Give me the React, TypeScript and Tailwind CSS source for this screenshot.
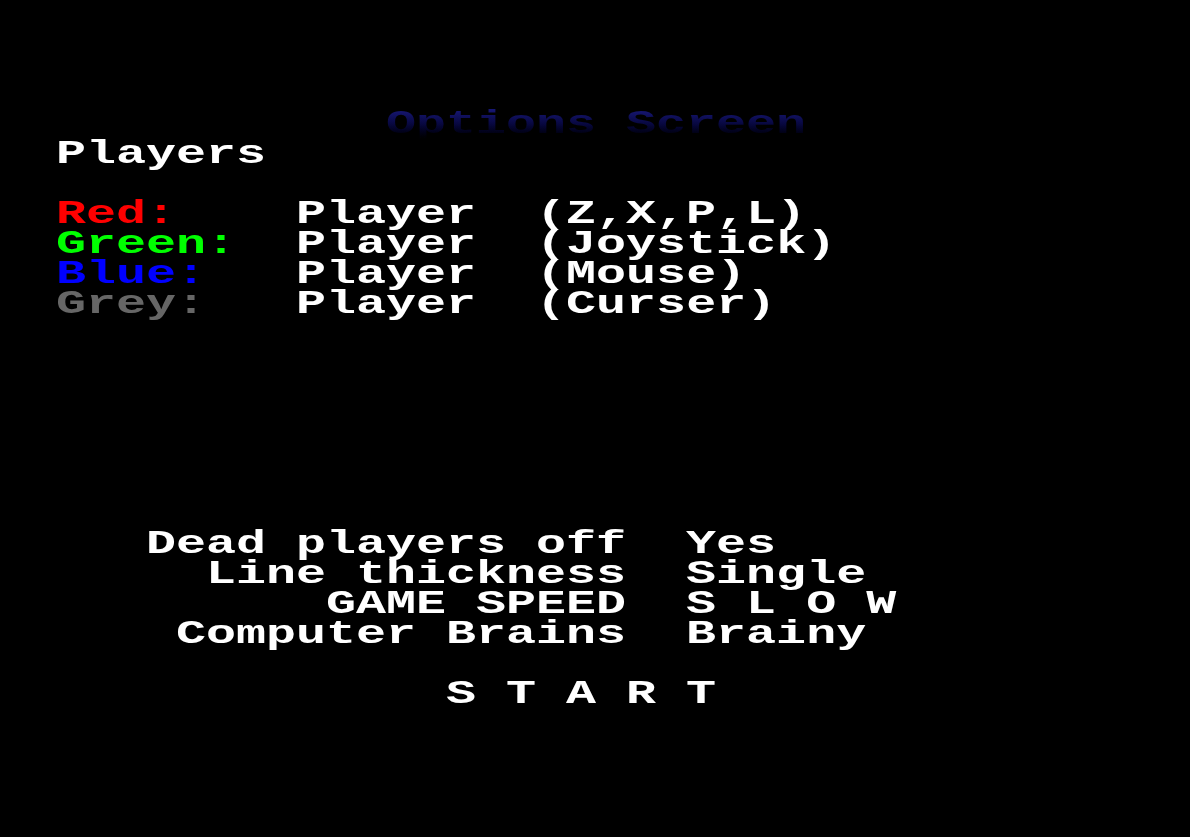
import React from 'react';

type Seg = { text: string; color?: string };

const rows: Seg[][] = [
  [{ text: 'Players' }],
  [],
  [{ text: 'Red:', color: 'text-[#ff0000]' }, { text: '    Player  (Z,X,P,L)' }],
  [{ text: 'Green:', color: 'text-[#00ff00]' }, { text: '  Player  (Joystick)' }],
  [{ text: 'Blue:', color: 'text-[#0000ff]' }, { text: '   Player  (Mouse)' }],
  [{ text: 'Grey:', color: 'text-[#666666]' }, { text: '   Player  (Curser)' }],
  [],
  [],
  [],
  [],
  [],
  [],
  [],
  [{ text: '   Dead players off  Yes' }],
  [{ text: '     Line thickness  Single' }],
  [{ text: '         GAME SPEED  S L O W' }],
  [{ text: '    Computer Brains  Brainy' }],
  [],
  [{ text: '             S T A R T' }],
];

const Row: React.FC<{ segs: Seg[] }> = ({ segs }) => (
  <div className="h-[30px] leading-[30px] whitespace-pre">
    {segs.map((s, i) => (
      <span key={i} className={s.color ?? 'text-white'}>
        {s.text}
      </span>
    ))}
  </div>
);

export default function App() {
  return (
    <div className="w-[1190px] h-[837px] bg-black overflow-hidden pt-[109px] pl-[56px]">
      {/* text grid: 34px Liberation Mono = 20.4px pitch, stretched to 30px cells */}
      <div className="origin-left scale-x-[1.4706] font-['Liberation_Mono',monospace] font-bold text-[34px]">
        <div className="h-[30px] leading-[30px] whitespace-pre">
          <span>{'           '}</span>
          <span className="bg-gradient-to-b from-[#1c1c86] via-[#080840] to-[#000000] bg-clip-text text-transparent">
            Options Screen
          </span>
        </div>
        {rows.map((r, i) => (
          <Row key={i} segs={r} />
        ))}
      </div>
    </div>
  );
}
